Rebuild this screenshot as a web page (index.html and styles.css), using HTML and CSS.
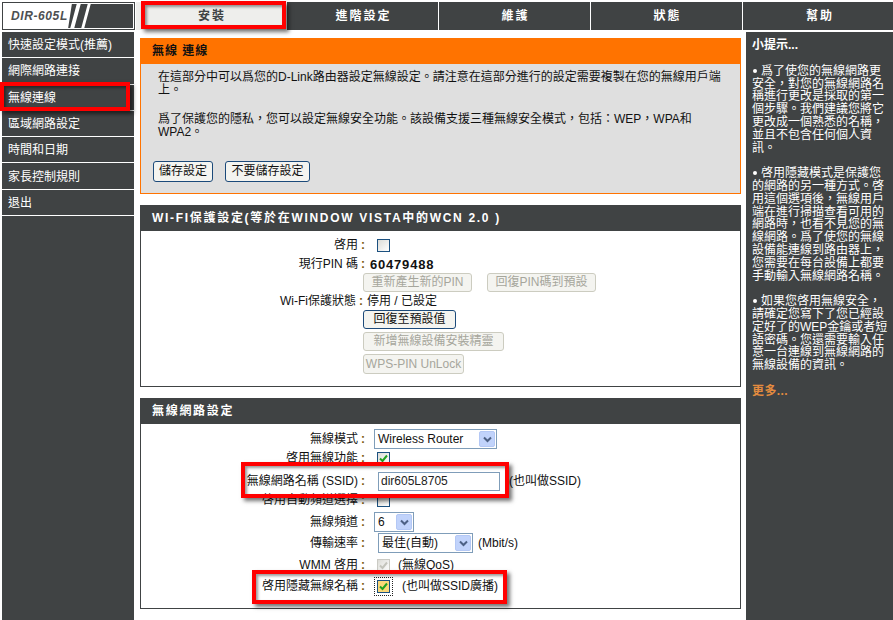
FILE: index.html
```html
<!DOCTYPE html>
<html lang="zh-Hant">
<head>
<meta charset="utf-8">
<title>DIR-605L</title>
<link rel="stylesheet" href="styles.css">
</head>
<body>
<div class="page">
  <header class="top">
    <div class="logo">
      <svg class="logo-art" width="133" height="28" viewBox="0 0 133 28"><rect x="1.5" y="1.5" width="130" height="25" fill="#404344" stroke="#fff"/><path d="M1 1H70L66 27H1zM75 1h4l-7 26h-4zM86 1h3l-7 26h-3z" fill="#fff"/></svg>
      <span class="logo-name">DIR-605L</span>
    </div>
    <nav class="tabs">
      <a class="tab tab-active">安裝</a>
      <a class="tab">進階設定</a>
      <a class="tab">維護</a>
      <a class="tab">狀態</a>
      <a class="tab">幫助</a>
    </nav>
  </header>
  <div class="columns">
    <aside class="side">
      <a class="side-item">快速設定模式(推薦)</a>
      <a class="side-item">網際網路連接</a>
      <a class="side-item">無線連線</a>
      <a class="side-item">區域網路設定</a>
      <a class="side-item">時間和日期</a>
      <a class="side-item">家長控制規則</a>
      <a class="side-item">退出</a>
    </aside>
    <main class="content">
      <section class="panel panel-orange">
        <h2 class="panel-head head-orange">無線 連線</h2>
        <div class="intro">
          <p class="para">在這部分中可以爲您的D-Link路由器設定無線設定。請注意在這部分進行的設定需要複製在您的無線用戶端上。</p>
          <p class="para para-second">爲了保護您的隱私，您可以設定無線安全功能。該設備支援三種無線安全模式，包括：WEP，WPA和WPA2。</p>
          <div class="save-row">
            <button class="btn btn-save b60">儲存設定</button>
            <button class="btn btn-save b85">不要儲存設定</button>
          </div>
        </div>
      </section>
      <section class="panel panel-wifi">
        <h2 class="panel-head">WI-FI保護設定(等於在WINDOW VISTA中的WCN 2.0 )</h2>
        <div class="form form-wifi">
          <div class="row h19"><span class="lbl">啓用<i>:</i></span><span class="box box-indent"></span></div>
          <div class="row h19"><span class="lbl">現行PIN 碼<i>:</i></span><b class="pin">60479488</b></div>
          <div class="row h18 val-offset"><button class="btn btn-off b109">重新產生新的PIN</button><button class="btn btn-off b109">回復PIN碼到預設</button></div>
          <div class="row h18"><span class="lbl lbl-tight">Wi-Fi保護狀態<i>:</i></span><span class="status">停用 / 已設定</span></div>
          <div class="row h19 val-offset"><button class="btn btn-on b93">回復至預設值</button></div>
          <div class="row h22 val-offset"><button class="btn btn-off b141">新增無線設備安裝精靈</button></div>
          <div class="row h23 val-offset"><button class="btn btn-off b101 tall">WPS-PIN UnLock</button></div>
        </div>
      </section>
      <section class="panel panel-radio">
        <h2 class="panel-head">無線網路設定</h2>
        <div class="form form-radio">
          <div class="row h20"><span class="lbl">無線模式<i>:</i></span><span class="select s123"><span class="sel-text">Wireless Router</span><span class="arrow"><svg width="9" height="7" viewBox="0 0 9 7"><path d="M1 1.5 4.5 5 8 1.5" fill="none" stroke="#4d6185" stroke-width="2"/></svg></span></span></div>
          <div class="row h18"><span class="lbl">啓用無線功能<i>:</i></span><span class="box box-indent"><svg width="11" height="11" viewBox="0 0 11 11"><path d="M2 5.5 4.5 8 9 2.5" fill="none" stroke="#21a121" stroke-width="2"/></svg></span></div>
          <div class="row h22 mt3"><span class="lbl">無線網路名稱 (SSID)<i>:</i></span><input class="ssid" type="text" value="dir605L8705"><span class="note note-ssid">(也叫做SSID)</span></div>
          <div class="row h16"><span class="lbl">啓用自動頻道選擇<i>:</i></span><span class="box box-indent"></span></div>
          <div class="row h20 mt4"><span class="lbl">無線頻道<i>:</i></span><span class="select s39"><span class="sel-text">6</span><span class="arrow"><svg width="9" height="7" viewBox="0 0 9 7"><path d="M1 1.5 4.5 5 8 1.5" fill="none" stroke="#4d6185" stroke-width="2"/></svg></span></span></div>
          <div class="row h20 mt1"><span class="lbl">傳輸速率<i>:</i></span><span class="select s96"><span class="sel-text">最佳(自動)</span><span class="arrow"><svg width="9" height="7" viewBox="0 0 9 7"><path d="M1 1.5 4.5 5 8 1.5" fill="none" stroke="#4d6185" stroke-width="2"/></svg></span></span><span class="note note-rate">(Mbit/s)</span></div>
          <div class="row h19 mt3"><span class="lbl">WMM 啓用<i>:</i></span><span class="box box-indent box-off"><svg width="11" height="11" viewBox="0 0 11 11"><path d="M2 5.5 4.5 8 9 2.5" fill="none" stroke="#c4c4bc" stroke-width="2"/></svg></span><span class="note note-qos">(無線QoS)</span></div>
          <div class="row h20 mt1"><span class="lbl">啓用隱藏無線名稱<i>:</i></span><span class="box box-indent box-focus"><svg width="11" height="11" viewBox="0 0 11 11"><path d="M2 5.5 4.5 8 9 2.5" fill="none" stroke="#21a121" stroke-width="2"/></svg></span><span class="note note-hide">(也叫做SSID廣播)</span></div>
        </div>
      </section>
      <section class="panel panel-next"></section>
    </main>
    <aside class="tips">
      <h3 class="tips-head">小提示...</h3>
      <p class="tip"><span class="dot"></span>爲了使您的無線網路更安全，對您的無線網路名稱進行更改是採取的第一個步驟。我們建議您將它更改成一個熟悉的名稱，並且不包含任何個人資訊。</p>
      <p class="tip"><span class="dot"></span>啓用隱藏模式是保護您的網路的另一種方式。啓用這個選項後，無線用戶端在進行掃描查看可用的網路時，也看不見您的無線網路。爲了使您的無線設備能連線到路由器上，您需要在每台設備上都要手動輸入無線網路名稱。</p>
      <p class="tip"><span class="dot"></span>如果您啓用無線安全，請確定您寫下了您已經設定好了的WEP金鑰或者短語密碼。您還需要輸入任意一台連線到無線網路的無線設備的資訊。</p>
      <a class="more">更多...</a>
    </aside>
  </div>
  <div class="mark mark-tab"></div>
  <div class="mark mark-side"></div>
  <div class="mark mark-ssid"></div>
  <div class="mark mark-hide"></div>
</div>
</body>
</html>
```

FILE: styles.css
```css
* { box-sizing: border-box; }
html, body { margin: 0; padding: 0; background: #fff; }
body { font: 12px/13px "Liberation Sans", "Noto Sans CJK TC", sans-serif; color: #111; }
.page { position: relative; width: 893px; height: 620px; overflow: hidden; background: #fff; }

.top { display: flex; height: 31px; padding: 2px 0 0 2px; }
.logo { position: relative; width: 133px; height: 28px; flex: none; background: #404344; display: flex; align-items: center; padding-left: 9px; }
.logo-art { position: absolute; left: 0; top: 0; }
.logo-name { position: relative; font: italic bold 12px "Liberation Sans", sans-serif; color: #4d5052; letter-spacing: .6px; }
.tabs { flex: 1; display: flex; background: #404344; border-left: 1px solid #fff; height: 29px; border-bottom: 1px solid #fff; }
.tab { width: 152px; flex: none; display: flex; align-items: center; justify-content: center; padding-left: 2px; color: #fff; font-weight: bold; font-size: 12px; letter-spacing: 2px; border-right: 1px solid #fff; }
.tab:last-child { flex: 1; border-right: 0; }
.tab-active { width: 151px; background: #eeeeec; color: #404344; padding-left: 2px; }

.columns { display: flex; height: 589px; padding: 1px 0 0 2px; }
.side { width: 132px; flex: none; background: #404344; }
.side-item { display: flex; align-items: center; height: 26.3px; padding: 2px 0 0 6px; color: #fff; border-bottom: 1px solid #fff; white-space: nowrap; }

.content { width: 601px; flex: none; margin: 6px 0 0 6px; }
.panel { border: 1px solid #404344; background: #fff; margin-bottom: 11px; }
.panel-head { margin: 0; height: 25px; padding: 0 11px; display: flex; align-items: center; background: #404344; color: #fff; font-size: 12px; line-height: 13px; font-weight: bold; letter-spacing: 1.7px; white-space: nowrap; }
.panel-orange { height: 156px; border-color: #ff7300; background: #dfdfdf; }
.head-orange { background: #ff7300; color: #111; letter-spacing: 1px; }
.intro { padding: 7px 17px 0 17px; }
.para { margin: 0; width: 565px; }
.para-second { margin-top: 16px; }
.save-row { display: flex; gap: 12px; margin-top: 22px; margin-left: -5px; }

.panel-wifi { height: 182px; }
.panel-radio { height: 211px; }
.panel-next { height: 40px; margin: 0; }
.form { padding-top: 5px; }
.form-radio { padding-top: 5px; }
.row { display: flex; align-items: center; white-space: nowrap; }
.h16 { height: 16px; }
.h18 { height: 18px; }
.h19 { height: 19px; }
.h20 { height: 20px; }
.h22 { height: 22px; }
.h23 { height: 23px; }
.mt1 { margin-top: 1px; }
.mt3 { margin-top: 3px; }
.mt4 { margin-top: 4px; }
.val-offset { padding-left: 222px; gap: 15px; align-items: flex-end; }
.lbl { width: 225px; text-align: right; flex: none; padding-right: 1px; }
.lbl i { font-style: normal; margin-left: 3px; color: #7a5a10; font-weight: bold; }
.lbl-tight { padding-right: 3px; }
.pin { margin-left: 4px; font-size: 13px; letter-spacing: .8px; }
.status { margin-left: 1px; }

.btn { height: 19px; padding: 0; font: 12px/13px "Liberation Sans", "Noto Sans CJK TC", sans-serif; border-radius: 3px; background: #f4f4f0; white-space: nowrap; }
.btn-save { height: 21px; border: 1px solid #1c4a7a; color: #111; }
.btn-on { border: 1px solid #1c4a7a; color: #111; }
.btn-off { border: 1px solid #ccccc0; color: #a6a69c; }
.tall { height: 20px; }
.b60 { width: 60px; }
.b85 { width: 85px; }
.b93 { width: 93px; }
.b109 { width: 109px; }
.b141 { width: 141px; }
.b101 { width: 101px; }

.box { width: 13px; height: 13px; flex: none; display: inline-flex; align-items: center; justify-content: center; border: 1px solid #1c5180; background: linear-gradient(135deg, #dcdcd7, #fff); }
.box-indent { margin-left: 11px; }
.box-off { border-color: #cacac4; }
.box-focus { outline: 1px dotted #222; outline-offset: 2px; background: #fbd878; }

.select { display: inline-flex; align-items: center; justify-content: space-between; height: 20px; flex: none; border: 1px solid #7f9db9; background: #fff; padding: 1px 1px 1px 3px; }
.s123 { width: 123px; margin-left: 8px; }
.s39 { width: 40px; margin-left: 8px; }
.s96 { width: 95px; margin-left: 12px; }
.sel-text { white-space: nowrap; }
.arrow { width: 16px; height: 16px; display: inline-flex; align-items: center; justify-content: center; background: #c1d3fb; border: 1px solid #b4c8f5; border-radius: 2px; }
.ssid { width: 122px; height: 19px; margin-left: 12px; border: 1px solid #7f9db9; padding: 0 2px; font: 12px "Liberation Sans", sans-serif; color: #222; background: #fff; }
.note { white-space: nowrap; }
.note-ssid { margin-left: 9px; }
.note-rate { margin-left: 5px; }
.note-qos { margin-left: 8px; }
.note-hide { margin-left: 12px; }

.tips { width: 147px; flex: none; margin-left: 5px; background: #404344; color: #fff; padding: 7px 2px 0 6px; line-height: 12.8px; }
.tips-head { margin: 0; font-size: 12px; line-height: 13px; font-weight: bold; }
.tip { margin: 12.8px 0 0; line-height: 12.8px; }
.dot { display: inline-block; width: 4px; height: 4px; border-radius: 50%; background: #fff; margin: 0 4px 2px 1px; }
.more { display: block; margin-top: 13px; color: #e38b3f; font-weight: bold; letter-spacing: .4px; }

.mark { position: absolute; border: 4px solid #f00; box-shadow: 3px 3px 4px rgba(0,0,0,.55), inset 2px 2px 3px rgba(0,0,0,.4); }
.mark-tab { left: 141px; top: 1px; width: 145px; height: 28px; }
.mark-side { left: 0; top: 82px; width: 130px; height: 29px; }
.mark-ssid { left: 241px; top: 462px; width: 268px; height: 36px; }
.mark-hide { left: 252px; top: 570px; width: 255px; height: 34px; }
```
